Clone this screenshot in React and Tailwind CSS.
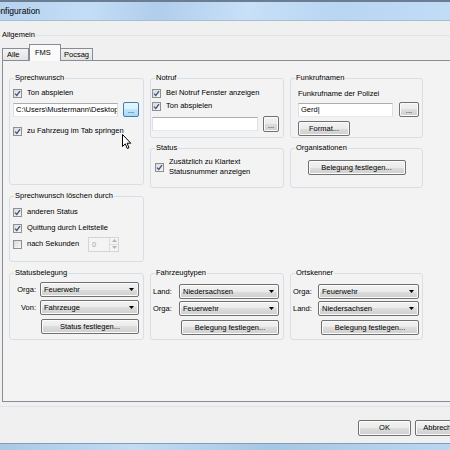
import React from "react";

const btn =
  "border border-[#707070] rounded-[2px] bg-[linear-gradient(#f2f2f2_0%,#ebebeb_50%,#dddddd_50%,#cfcfcf_100%)] shadow-[inset_0_0_0_1px_#fbfbfb] flex items-center justify-center";

function Check({ checked = true, children, className = "" }) {
  return (
    <div className={"flex items-center " + className}>
      <div className="w-[9px] h-[9px] shrink-0 border border-[#8e8f8f] bg-[linear-gradient(135deg,#dadada,#f6f6f6)] flex items-center justify-center">
        {checked && (
          <svg width="7" height="7" viewBox="0 0 7 7">
            <path d="M1 3.6 L2.8 5.4 L6 1.2" fill="none" stroke="#3e5185" strokeWidth="1.3" />
          </svg>
        )}
      </div>
      <span className="ml-[5px] leading-[10px]">{children}</span>
    </div>
  );
}

function Group({ title, className = "", children }) {
  return (
    <fieldset className={"border border-[#d5dfe5] rounded-[3px] min-w-0 " + className}>
      <legend className="ml-[4px] px-[1px] leading-[10px]">{title}</legend>
      {children}
    </fieldset>
  );
}

function TextBox({ className = "", children }) {
  return (
    <div className={"bg-white border border-[#abadb3] border-l-[#dbdfe6] border-r-[#dbdfe6] border-b-[#e3e9ef] flex items-center pl-[2px] overflow-hidden whitespace-nowrap " + className}>
      {children}
    </div>
  );
}

function Select({ value, className = "" }) {
  return (
    <div className={btn + " !justify-between pl-[3px] pr-[4px] " + className}>
      <span>{value}</span>
      <svg width="5" height="3" viewBox="0 0 5 3">
        <path d="M0 0 H5 L2.5 3 Z" fill="#000" />
      </svg>
    </div>
  );
}

function Row({ label, labelClass, children, className = "" }) {
  return (
    <div className={"flex items-center " + className}>
      <span className={labelClass}>{label}</span>
      {children}
    </div>
  );
}

export default function App() {
  return (
    <div className="w-[450px] h-[450px] overflow-hidden bg-[#f0f0f0] text-black text-[7.5px] font-['Liberation_Sans',Arial,sans-serif]">
      {/* title bar */}
      <div className="h-[21px] border-t-[2px] border-t-[#6a7d92] border-b border-b-[#a7bdd3] bg-[linear-gradient(100deg,#b6d2ee_0%,#c4ddf7_20%,#b0cdeb_35%,#c8e0f8_55%,#b8d5f2_75%,#c2dcf6_100%)] flex items-center">
        <span className="-ml-[10px] text-[8.5px] leading-[10px]">Konfiguration</span>
      </div>

      {/* Allgemein group */}
      <fieldset className="-ml-[5px] w-[520px] h-[377px] mt-[9px] border border-[#dde4ea] rounded-[3px]">
        <legend className="ml-[5px] px-[1px] leading-[10px]">Allgemein</legend>

        {/* tabs */}
        <div className="flex items-end h-[16px] mt-[4px] pl-[6px]">
          <div className="h-[12px] w-[27px] border border-b-0 border-[#898c95] bg-[linear-gradient(#f3f3f3,#e3e3e3)] pl-[4px] leading-[11px]">
            Alle
          </div>
          <div className="relative z-[1] -mb-px h-[17px] w-[32px] border border-b-0 border-[#898c95] bg-[#fafafa] pl-[5px] pt-[3px] leading-[10px]">
            FMS
          </div>
          <div className="h-[12px] w-[32px] border border-b-0 border-l-0 border-[#898c95] bg-[linear-gradient(#f3f3f3,#e3e3e3)] pl-[3px] leading-[11px]">
            Pocsag
          </div>
        </div>

        {/* tab panel */}
        <div className="ml-[6px] h-[342px] border border-[#898c95] bg-[#f3f3f3] pt-[12px] pl-[6px]">
          {/* row 1 */}
          <div className="flex items-start h-[115px]">
            <Group title="Sprechwunsch" className="w-[135px] h-[112px] relative">
              <div className="pl-[3px]">
                <Check className="mt-[5px]">Ton abspielen</Check>
                <div className="flex items-center mt-[4px] h-[15px]">
                  <TextBox className="w-[105px] h-[14px]">C:\Users\Mustermann\Desktop</TextBox>
                  <div className="ml-[5px] w-[16px] h-[15px] border border-[#3c7fb1] rounded-[2px] bg-[linear-gradient(#eaf6fd_0%,#d9f0fc_50%,#bee6fd_50%,#a7d9f5_100%)] flex items-end justify-center leading-[10px]">
                    ...
                  </div>
                </div>
                <Check className="mt-[9px]">zu Fahrzeug im Tab springen</Check>
              </div>
              <svg className="absolute left-[112px] top-[51px]" width="10" height="16" viewBox="0 0 10 16">
                <path d="M0.5 0.5 V12.5 L3.3 9.8 L5.3 14.5 L7 13.8 L5.1 9.2 H8.8 Z" fill="#fff" stroke="#000" strokeWidth="1" strokeLinejoin="round" />
              </svg>
            </Group>

            <div className="ml-[6px] w-[134px] flex flex-col">
              <Group title="Notruf" className="h-[65px]">
                <div className="pl-[1px]">
                  <Check className="mt-[5px]">Bei Notruf Fenster anzeigen</Check>
                  <Check className="mt-[3px]">Ton abspielen</Check>
                  <div className="flex items-center mt-[5px] h-[16px]">
                    <TextBox className="w-[106px] h-[14px]" />
                    <div className={btn + " ml-[5px] w-[16px] h-[16px] !items-end leading-[10px]"}>...</div>
                  </div>
                </div>
              </Group>
              <Group title="Status" className="h-[45px] mt-[5px]">
                <div className="flex items-center pl-[4px] mt-[4px]">
                  <Check>
                    <span className="block">Zusätzlich zu Klartext</span>
                    <span className="block">Statusnummer anzeigen</span>
                  </Check>
                </div>
              </Group>
            </div>

            <div className="ml-[6px] w-[133px] flex flex-col">
              <Group title="Funkrufnamen" className="h-[65px]">
                <div className="pl-[7px]">
                  <div className="mt-[6px] leading-[10px]">Funkrufname der Polizei</div>
                  <div className="flex items-center mt-[3px] h-[15px]">
                    <TextBox className="w-[95px] h-[14px]">Gerd|</TextBox>
                    <div className={btn + " ml-[6px] w-[20px] h-[15px] !items-end leading-[10px]"}>...</div>
                  </div>
                  <div className={btn + " mt-[4px] w-[52px] h-[15px]"}>Format...</div>
                </div>
              </Group>
              <Group title="Organisationen" className="h-[45px] mt-[5px]">
                <div className={btn + " mx-auto mt-[7px] w-[98px] h-[15px]"}>Belegung festlegen...</div>
              </Group>
            </div>
          </div>

          {/* row 2 */}
          <Group title="Sprechwunsch löschen durch" className="w-[135px] h-[71px] mt-[3px]">
            <div className="pl-[3px]">
              <Check className="mt-[6px]">anderen Status</Check>
              <Check className="mt-[6px]">Quittung durch Leitstelle</Check>
              <div className="flex items-center mt-[4px] h-[14px]">
                <Check checked={false}>
                  <span className="inline-block w-[61px]">nach Sekunden</span>
                </Check>
                <div className="w-[31px] h-[15px] border border-[#d5d5d5] bg-[#f4f4f4] flex">
                  <span className="flex-1 pl-[3px] leading-[13px] text-[#a8a8a8]">0</span>
                  <div className="w-[9px] border-l border-[#dcdcdc] flex flex-col">
                    <div className="flex-1 flex items-center justify-center border-b border-[#dcdcdc]">
                      <svg width="5" height="3" viewBox="0 0 5 3"><path d="M0 3 H5 L2.5 0 Z" fill="#b5b5b5" /></svg>
                    </div>
                    <div className="flex-1 flex items-center justify-center">
                      <svg width="5" height="3" viewBox="0 0 5 3"><path d="M0 0 H5 L2.5 3 Z" fill="#b5b5b5" /></svg>
                    </div>
                  </div>
                </div>
              </div>
            </div>
          </Group>

          {/* row 3 */}
          <div className="flex items-start mt-[6px]">
            <Group title="Statusbelegung" className="w-[135px] h-[72px]">
              <Row label="Orga:" labelClass="w-[26px] text-right mr-[4px]" className="mt-[4px]">
                <Select value="Feuerwehr" className="w-[99px] h-[15px]" />
              </Row>
              <Row label="Von:" labelClass="w-[26px] text-right mr-[4px]" className="mt-[3px]">
                <Select value="Fahrzeuge" className="w-[99px] h-[15px]" />
              </Row>
              <div className={btn + " ml-[31px] mt-[4px] w-[98px] h-[15px]"}>Status festlegen...</div>
            </Group>

            <Group title="Fahrzeugtypen" className="ml-[6px] w-[134px] h-[72px]">
              <Row label="Land:" labelClass="w-[28px] pl-[2px]" className="mt-[6px]">
                <Select value="Niedersachsen" className="w-[100px] h-[15px]" />
              </Row>
              <Row label="Orga:" labelClass="w-[28px] pl-[2px]" className="mt-[2px]">
                <Select value="Feuerwehr" className="w-[100px] h-[15px]" />
              </Row>
              <div className={btn + " ml-[30px] mt-[4px] w-[98px] h-[15px]"}>Belegung festlegen...</div>
            </Group>

            <Group title="Ortskenner" className="ml-[6px] w-[133px] h-[72px]">
              <Row label="Orga:" labelClass="w-[27px] pl-[2px]" className="mt-[6px]">
                <Select value="Feuerwehr" className="w-[101px] h-[15px]" />
              </Row>
              <Row label="Land:" labelClass="w-[27px] pl-[2px]" className="mt-[2px]">
                <Select value="Niedersachsen" className="w-[101px] h-[15px]" />
              </Row>
              <div className={btn + " ml-[30px] mt-[4px] w-[98px] h-[15px]"}>Belegung festlegen...</div>
            </Group>
          </div>
        </div>
      </fieldset>

      {/* dialog buttons */}
      <div className="flex mt-[13px] pl-[358px] gap-[4px] h-[16px]">
        <div className={btn + " w-[53px] h-[16px] shrink-0"}>OK</div>
        <div className={btn + " w-[53px] h-[16px] shrink-0"}>Abbrechen</div>
      </div>

      {/* window frame bottom */}
      <div className="mt-[7px] h-[8px] border-t border-[#7f9cbb] bg-[linear-gradient(90deg,#a9c8e6,#c3dbf3_30%,#a7c6e5_60%,#bcd6f0)]" />
    </div>
  );
}
